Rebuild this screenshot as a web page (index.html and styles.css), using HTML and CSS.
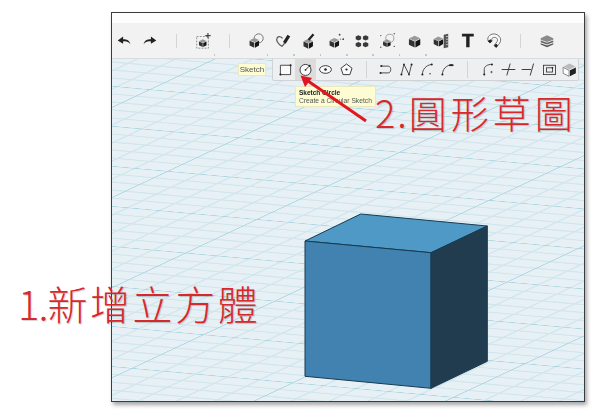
FILE: index.html
```
<!DOCTYPE html>
<html lang="zh-Hant">
<head>
<meta charset="utf-8">
<title>新增立方體與圓形草圖</title>
<link rel="stylesheet" href="styles.css">
</head>
<body>
<svg class="defs" width="0" height="0" aria-hidden="true">
  <defs>
    <symbol id="cube" viewBox="0 0 20 20">
      <path d="M2.5 7 9.5 3.5 16.5 6.5 10 10Z" fill="#9a9a9a"/>
      <path d="M2.5 7.5 9.5 10.5V18L2.5 14.5Z" fill="#333"/>
      <path d="M10.5 10.5 16.5 7.5V14.5L10.5 18Z" fill="#151515"/>
    </symbol>
  </defs>
</svg>
<div class="page">
  <div class="window">
    <div class="top-strip"></div>
    <div class="toolbar">
      <div class="tool"><svg class="icon" viewBox="0 0 20 20"><path d="M9 5 3 9.500 9 13V10.500C12 10 15 10.500 17 13.500 16.500 9.500 13 8 9 8Z" fill="#222"/></svg></div>
      <div class="tool"><svg class="icon" viewBox="0 0 20 20"><path d="M11 5 17 9.500 11 13V10.500C8 10 5 10.500 3 13.500 3.500 9.500 7 8 11 8Z" fill="#222"/></svg></div>
      <div class="tool"><span class="sep"></span></div>
      <div class="tool more"><svg class="icon" viewBox="0 0 20 20"><rect x="3" y="5" width="13" height="13" fill="none" stroke="#888" stroke-dasharray="2 1.500"/><use href="#cube" x="4" y="5.500" width="12" height="13"/><path d="M15.500 1V7M12.500 4H18.500" stroke="#444" stroke-width="1.300"/></svg></div>
      <div class="tool"><span class="sep"></span></div>
      <div class="tool more"><svg class="icon" viewBox="0 0 20 20"><circle cx="13" cy="7" r="5" fill="none" stroke="#777" stroke-width="1.100"/><use href="#cube" x="1" y="3" width="15" height="17"/></svg></div>
      <div class="tool more"><svg class="icon" viewBox="0 0 20 20"><path d="M9 16C4 13 2 9 3.500 6.500 5 4.500 8 5 9.500 7" fill="none" stroke="#555" stroke-width="1.300"/><path d="M9 16 12 12" stroke="#555" stroke-width="1.300"/><path d="M10 11 15 3 18 5 13 13Z" fill="#222"/></svg></div>
      <div class="tool more"><svg class="icon" viewBox="0 0 20 20"><use href="#cube" x="2" y="5" width="15" height="15"/><path d="M9.500 9 15 2.500" stroke="#222" stroke-width="2.500"/></svg></div>
      <div class="tool more"><svg class="icon" viewBox="0 0 20 20"><use href="#cube" x="1" y="4" width="15" height="15"/><circle cx="14" cy="3" r="1" fill="#444"/><circle cx="18" cy="8" r="1" fill="#444"/><circle cx="15" cy="8" r=".7" fill="#777"/></svg></div>
      <div class="tool more"><svg class="icon" viewBox="0 0 20 20"><g fill="#3a3a3a"><path d="M3 5 6 3.500 9 5V8L6 9.500 3 8Z"/><path d="M11 5 14 3.500 17 5V8L14 9.500 11 8Z"/><path d="M3 12.500 6 11 9 12.500V15.500L6 17 3 15.500Z"/><path d="M11 12.500 14 11 17 12.500V15.500L14 17 11 15.500Z"/></g></svg></div>
      <div class="tool more"><svg class="icon" viewBox="0 0 20 20"><use href="#cube" x="3" y="6" width="12" height="12"/><circle cx="12" cy="7" r="4.500" fill="none" stroke="#999"/><g fill="#555"><circle cx="2" cy="4" r=".8"/><circle cx="17" cy="2" r=".8"/><circle cx="2" cy="17" r=".8"/><circle cx="17" cy="16" r=".8"/></g></svg></div>
      <div class="tool more"><svg class="icon" viewBox="0 0 20 20"><use href="#cube" x="1" y="1" width="18" height="18"/></svg></div>
      <div class="tool"><svg class="icon" viewBox="0 0 20 20"><use href="#cube" x="0" y="1" width="15" height="18"/><path d="M13 3 18 2V17L13 18Z" fill="#555"/><path d="M15.500 5H18M15.500 8H18M15.500 11H18M15.500 14H18" stroke="#ddd" stroke-width=".8"/></svg></div>
      <div class="tool"><span class="glyph-t">T</span></div>
      <div class="tool"><svg class="icon" viewBox="0 0 20 20"><path d="M5.500 12 3.500 10C1.500 5 7 1 12 2.500 18 4.500 19 10 15 14L12.500 17 10 15 12.500 12C15 9 14 7 11.500 6 8 5.500 6.500 8 8 10L5.500 12Z" fill="#fafafa" stroke="#555" stroke-width=".9"/><path d="M3 10 5.500 12.500 8 10 6 8ZM10 15 12.500 17.500 14.500 15 12.500 13Z" fill="#222"/></svg></div>
      <div class="tool"><span class="sep"></span></div>
      <div class="tool"><svg class="icon" viewBox="0 0 20 20"><path d="M3 7 10 3.500 17 7V8.500L10 11 3 8.500Z" fill="#8a8a8a"/><path d="M3 9.500 10 12 17 9.500V11.500L10 14 3 11.500Z" fill="#666"/><path d="M3 12.500 10 15 17 12.500V14L10 17 3 14Z" fill="#555"/></svg></div>
    </div>
    <div class="canvas">
      <svg class="scene" viewBox="0 0 472 342" preserveAspectRatio="none">
        <defs>
          <pattern id="grid" width="100" height="100" patternUnits="userSpaceOnUse" patternTransform="matrix(1.607 .145 -.714 .336 126.800 78.400)">
            <path d="M0 20H100M0 40H100M0 60H100M0 80H100" stroke="#d0e5ec" stroke-width="2.600"/>
            <path d="M20 0V100M40 0V100M60 0V100M80 0V100" stroke="#d0e5ec" stroke-width="1.500"/>
            <path d="M0 0H100" stroke="#a8d4df" stroke-width="3.200"/>
            <path d="M0 0V100" stroke="#a8d4df" stroke-width="1.900"/>
          </pattern>
        </defs>
        <rect width="472" height="342" fill="#e7f0f5"/>
        <rect width="472" height="342" fill="url(#grid)"/>
        <g stroke="#173a50" stroke-width="1" stroke-linejoin="round">
          <path d="M248.700 155 375.300 167 319 193.700 193 182Z" fill="#4f99c6"/>
          <path d="M193 182 319 193.700V329.300L193 317.300Z" fill="#4282b0"/>
          <path d="M319 193.700 375.300 167V302.300L319 329.300Z" fill="#213c4e"/>
        </g>
      </svg>
      <div class="hint hint-sketch">Sketch</div>
      <div class="palette">
        <span class="notch"></span>
        <div class="ptool"><svg class="icon" viewBox="0 0 20 20"><path d="M4 5H16V16H4Z" fill="#fafafa" stroke="#333"/><circle cx="16" cy="5" r="1.200" fill="#222"/><circle cx="4" cy="16" r="1.200" fill="#222"/></svg></div>
        <div class="ptool active"><svg class="icon" viewBox="0 0 20 20"><circle cx="10" cy="10.500" r="6.500" fill="#fafafa" stroke="#333" stroke-width="1.100"/><path d="M10 10.500 14.500 6" stroke="#222" stroke-width="1.100"/><circle cx="10" cy="10.500" r="1" fill="#222"/><circle cx="15" cy="5.500" r="1.100" fill="#222"/></svg></div>
        <div class="ptool"><svg class="icon" viewBox="0 0 20 20"><ellipse cx="10" cy="10" rx="7" ry="4.500" fill="#fafafa" stroke="#333" stroke-width="1.100"/><circle cx="10" cy="10" r="1.500" fill="#222"/></svg></div>
        <div class="ptool"><svg class="icon" viewBox="0 0 20 20"><path d="M10 3.500 16.500 8.500 14 16H6L3.500 8.500Z" fill="#fafafa" stroke="#333" stroke-width="1.100"/><circle cx="10" cy="10" r="1.300" fill="#222"/></svg></div>
        <div class="ptool"><span class="sep"></span></div>
        <div class="ptool"><svg class="icon" viewBox="0 0 20 20"><path d="M3 6H12C16 6 16 14 12 14H3" fill="none" stroke="#333"/><circle cx="4" cy="6" r="1.200" fill="#222"/><circle cx="3" cy="14" r="1.200" fill="#222"/></svg></div>
        <div class="ptool"><svg class="icon" viewBox="0 0 20 20"><path d="M4 16 7 4 13 16 16 4" fill="none" stroke="#333"/><circle cx="4" cy="16" r="1.200" fill="#222"/><circle cx="7" cy="4" r="1" fill="#222"/><circle cx="13" cy="16" r="1" fill="#222"/><circle cx="16" cy="4" r="1.200" fill="#222"/></svg></div>
        <div class="ptool"><svg class="icon" viewBox="0 0 20 20"><path d="M4 16C4 10 8 5 15 4" fill="none" stroke="#333"/><circle cx="4" cy="16" r="1.200" fill="#222"/><circle cx="15" cy="4" r="1.200" fill="#222"/><circle cx="13" cy="15" r=".9" fill="#333"/></svg></div>
        <div class="ptool"><svg class="icon" viewBox="0 0 20 20"><path d="M4 16C4 10 8 5 16 4" fill="none" stroke="#333"/><circle cx="4" cy="16" r="1.200" fill="#222"/><path d="M12 4H17V6H12Z" fill="#222"/></svg></div>
        <div class="ptool"><span class="sep"></span></div>
        <div class="ptool"><svg class="icon" viewBox="0 0 20 20"><path d="M5 16V10C5 6 9 4 14 4" fill="none" stroke="#333"/><circle cx="5" cy="16" r="1.200" fill="#222"/><circle cx="14" cy="4" r="1.200" fill="#222"/><path d="M12 13H15M13.500 11.500V14.500" stroke="#333" stroke-width=".7"/></svg></div>
        <div class="ptool"><svg class="icon" viewBox="0 0 20 20"><path d="M2 10H18M12 3 8 17" fill="none" stroke="#333" stroke-width="1.100"/></svg></div>
        <div class="ptool"><svg class="icon" viewBox="0 0 20 20"><path d="M2 10H13M16 3 12 17" fill="none" stroke="#333" stroke-width="1.100"/></svg></div>
        <div class="ptool"><svg class="icon" viewBox="0 0 20 20"><rect x="3" y="5" width="14" height="11" fill="none" stroke="#333"/><rect x="6.500" y="8" width="7" height="5" fill="none" stroke="#333"/><circle cx="13.500" cy="8" r="1" fill="#222"/></svg></div>
        <div class="ptool"><svg class="icon" viewBox="0 0 20 20"><path d="M3 6.500 10 3 17 6.500 10 10Z" fill="#bbb"/><path d="M2.500 7.500 9.500 11V18L2.500 14.500Z" fill="#fff" stroke="#222" stroke-width=".6"/><path d="M10.500 11 17.500 7.500V14.500L10.500 18Z" fill="#222"/></svg></div>
      </div>
      <div class="hint hint-circle">
        <strong>Sketch Circle</strong>
        <span>Create a Circular Sketch</span>
      </div>
    </div>
  </div>
  <svg class="arrow" viewBox="0 0 600 418" aria-hidden="true">
    <path d="M366 121 308 81" stroke="#e2161f" stroke-width="3"/>
    <path d="M300.500 75.500 312 78 305 87Z" fill="#e2161f"/>
  </svg>
  <div class="note note-one"><span class="num-one">1.</span>新增立方體</div>
  <div class="note note-two"><span class="num-two">2.</span>圓形草圖</div>
</div>
</body>
</html>
```

FILE: styles.css
```
html, body {
  margin: 0;
  padding: 0;
  background: #fff;
}

.defs {
  display: block;
  height: 0;
}

.page {
  position: relative;
  width: 600px;
  height: 418px;
  overflow: hidden;
  padding: 12px 0 0 111px;
  box-sizing: border-box;
}

.window {
  width: 474px;
  height: 390px;
  box-sizing: border-box;
  border: 1px solid #3a3d40;
  box-shadow: 2px 3px 4px rgba(0, 0, 0, .35);
  display: flex;
  flex-direction: column;
  background: #fff;
  filter: blur(.4px);
}

.top-strip {
  height: 10px;
  background: #fdfdfd;
}

.toolbar {
  height: 36px;
  background: #f2f2f2;
  border-bottom: 1px solid #d8dcdd;
  box-sizing: border-box;
  display: flex;
  align-items: center;
  gap: 2.45px;
}

.tool {
  position: relative;
  width: 24px;
  height: 24px;
  display: flex;
  align-items: center;
  justify-content: center;
  flex: none;
}

.more::after {
  content: "";
  position: absolute;
  right: 0;
  bottom: -3px;
  width: 1.5px;
  height: 1.5px;
  background: #c6c6c6;
}

.icon {
  width: 18px;
  height: 18px;
  display: block;
}

.sep {
  display: block;
  width: 1px;
  height: 14px;
  background: #d4d4d4;
}

.glyph-t {
  font: 700 19px/20px "Liberation Sans", sans-serif;
  color: #222;
  -webkit-text-stroke: .6px #222;
}

.canvas {
  position: relative;
  flex: 1;
  min-height: 0;
  overflow: hidden;
}

.scene {
  display: block;
  width: 100%;
  height: 100%;
}

.palette {
  position: absolute;
  left: 160px;
  top: -2px;
  width: 307px;
  height: 24px;
  box-sizing: border-box;
  padding-left: 2px;
  display: flex;
  align-items: center;
  background: #eeeff0;
  border: 1px solid #d0d3d5;
  border-radius: 2px;
}

.notch {
  position: absolute;
  left: 6px;
  top: -4px;
  border-left: 4px solid transparent;
  border-right: 4px solid transparent;
  border-bottom: 4px solid #eeeff0;
}

.ptool {
  width: 20.3px;
  height: 22px;
  flex: none;
  display: flex;
  align-items: center;
  justify-content: center;
}

.ptool .icon {
  width: 17px;
  height: 17px;
}

.ptool .sep {
  height: 17px;
}

.active {
  background: #dcdcdc;
}

.hint {
  position: absolute;
  box-sizing: border-box;
  background: #fdfcd2;
  border: 1px solid #e9e8bf;
  color: #555;
  font-family: "Liberation Sans", Arial, sans-serif;
}

.hint-sketch {
  left: 126px;
  top: 4px;
  width: 28px;
  height: 13px;
  font-size: 8px;
  line-height: 11px;
  text-align: center;
}

.hint-circle {
  left: 183px;
  top: 27px;
  width: 81px;
  height: 21px;
  padding: 2px 0 0 3px;
  font-size: 6.7px;
  line-height: 7.5px;
  white-space: nowrap;
  display: flex;
  flex-direction: column;
}

.hint-circle strong {
  color: #222;
  font-size: 6.5px;
}

.arrow {
  position: absolute;
  left: 0;
  top: 0;
  width: 600px;
  height: 418px;
}

.note {
  position: absolute;
  font-family: "Noto Sans CJK TC", "Noto Sans", sans-serif;
  font-weight: 300;
  color: #d8282c;
  white-space: nowrap;
  font-size: 40px;
  line-height: 46px;
  letter-spacing: 2.6px;
  text-shadow: 1px 1px 1px rgba(0, 0, 0, .18);
}

.note-one {
  left: 18px;
  top: 280px;
}

.num-one {
  letter-spacing: -1px;
}

.note-two {
  left: 375px;
  top: 89px;
  font-size: 38px;
  letter-spacing: 4px;
}

.num-two {
  letter-spacing: 2px;
}
```
